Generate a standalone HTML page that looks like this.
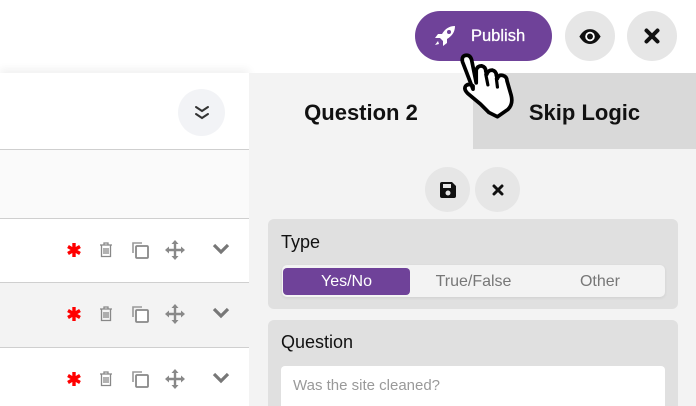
<!DOCTYPE html>
<html><head><meta charset="utf-8"><style>
*{box-sizing:border-box;margin:0;padding:0}
html,body{width:696px;height:406px;overflow:hidden}
body{background:#fff;font-family:"Liberation Sans",sans-serif;position:relative}
.abs{position:absolute}
.circ{position:absolute;border-radius:50%;display:flex;align-items:center;justify-content:center}
.line{position:absolute;left:0;width:249px;height:1px;background:#cfcfcf}
.ic{position:absolute}
</style></head><body>
<div class="abs" style="left:415px;top:11px;width:137px;height:50px;border-radius:25px;background:#6f4299;color:#fff;font-size:16.5px;display:flex;align-items:center;padding-left:56px;-webkit-text-stroke:0.3px #fff">Publish</div>
<svg class="abs" style="left:433px;top:25px" width="24" height="22" viewBox="0 0 24 22"><path d="M22 1C16 1 12 4 9 9L5 9 2 13 7 13 10 16 10 21 14 18 14 14C19 11 22 7 22 1Z" fill="#fff"/><circle cx="16" cy="7" r="2" fill="#6f4299"/><path d="M5 16L2 20 6 19Z" fill="#fff"/></svg>
<div class="circ" style="left:565px;top:11px;width:50px;height:50px;background:#e6e6e6">
<svg width="24" height="17" viewBox="0 0 22 16"><path d="M1 8C4 3 7 1 11 1S18 3 21 8C18 13 15 15 11 15S4 13 1 8Z" fill="#111"/><circle cx="11" cy="8" r="4.5" fill="#fff"/><circle cx="11" cy="8" r="2.8" fill="#111"/></svg></div>
<div class="circ" style="left:627px;top:11px;width:50px;height:50px;background:#e6e6e6">
<svg width="16" height="16" viewBox="0 0 16 16"><path d="M2.5 2.5L13.5 13.5M13.5 2.5L2.5 13.5" stroke="#111" stroke-width="4" stroke-linecap="round"/></svg></div>

<div class="abs" style="left:0;top:73px;width:249px;height:333px;background:#fff;box-shadow:0 -4px 8px rgba(0,0,0,0.06)"></div>
<div class="abs" style="left:0;top:150px;width:249px;height:68px;background:#fafafa"></div>
<div class="abs" style="left:0;top:283px;width:249px;height:64px;background:#f3f3f3"></div>
<div class="line" style="top:149px"></div>
<div class="line" style="top:218px"></div>
<div class="line" style="top:282px"></div>
<div class="line" style="top:347px"></div>
<div class="circ" style="left:178px;top:89px;width:47px;height:47px;background:#f2f3f6">
<svg width="16" height="16" viewBox="0 0 16 16"><path d="M2 2L8 6 14 2M2 9L8 13 14 9" stroke="#333" stroke-width="2" fill="none" stroke-linecap="round"/></svg></div>

<div class="abs" style="left:249px;top:73px;width:447px;height:333px;background:#f3f3f3"></div>
<div class="abs" style="left:473px;top:73px;width:223px;height:76px;background:#d9d9d9"></div>
<div class="abs" style="left:249px;top:100px;width:224px;text-align:center;font-size:22px;font-weight:bold;color:#111">Question 2</div>
<div class="abs" style="left:473px;top:100px;width:223px;text-align:center;font-size:22px;font-weight:bold;color:#111">Skip Logic</div>
<div class="circ" style="left:425px;top:167px;width:45px;height:45px;background:#e6e6e6">
<svg width="18" height="18" viewBox="0 0 18 18"><path d="M1 3Q1 1 3 1L13 1 17 5 17 15Q17 17 15 17L3 17Q1 17 1 15Z" fill="#111"/><rect x="4" y="3" width="8" height="4" fill="#e6e6e6"/><circle cx="9" cy="12" r="2.5" fill="#e6e6e6"/></svg></div>
<div class="circ" style="left:475px;top:167px;width:45px;height:45px;background:#e6e6e6">
<svg width="12" height="12" viewBox="0 0 12 12"><path d="M2 2L10 10M10 2L2 10" stroke="#111" stroke-width="3" stroke-linecap="round"/></svg></div>

<div class="abs" style="left:268px;top:219px;width:410px;height:90px;background:#e0e0e0;border-radius:6px"></div>
<div class="abs" style="left:281px;top:232px;font-size:18px;color:#111">Type</div>
<div class="abs" style="left:282px;top:265px;width:383px;height:32px;background:#f3f3f3;border-radius:5px;box-shadow:0 1px 3px rgba(0,0,0,0.08)"></div>
<div class="abs" style="left:283px;top:268px;width:127px;height:27px;background:#6f4299;border-radius:4px;color:#fff;font-size:16px;text-align:center;line-height:28px">Yes/No</div>
<div class="abs" style="left:410px;top:268px;width:127px;line-height:28px;text-align:center;font-size:16px;color:#777">True/False</div>
<div class="abs" style="left:537px;top:268px;width:126px;line-height:28px;text-align:center;font-size:16px;color:#777">Other</div>

<div class="abs" style="left:268px;top:320px;width:410px;height:100px;background:#e0e0e0;border-radius:6px"></div>
<div class="abs" style="left:281px;top:332px;font-size:18px;color:#111">Question</div>
<div class="abs" style="left:281px;top:366px;width:384px;height:50px;background:#fff;border-radius:4px;padding:11px 12px;font-size:15px;color:#999">Was the site cleaned?</div>

<div id="rows"></div>
<script>
var ys=[250,314,379],h='';
ys.forEach(function(y){
h+='<svg class="ic" style="left:66px;top:'+(y-8)+'px" width="16" height="16" viewBox="0 0 16 16"><path d="M8 1V15M2 4.5L14 11.5M14 4.5L2 11.5" stroke="#f00" stroke-width="3.4"/></svg>';
h+='<svg class="ic" style="left:99px;top:'+(y-8)+'px" width="14" height="16" viewBox="0 0 14 16"><path d="M1 3H13M5 3V1H9V3M2.5 3.5V14.5H11.5V3.5M5 6V12M7 6V12M9 6V12" stroke="#888" stroke-width="1.3" fill="none"/></svg>';
h+='<svg class="ic" style="left:130px;top:'+(y-10)+'px" width="20" height="20" viewBox="0 0 20 20"><path d="M12 3H3V13" stroke="#999" stroke-width="1.6" fill="none"/><rect x="6" y="6" width="12" height="12" rx="1" stroke="#888" stroke-width="1.8" fill="#fff"/></svg>';
h+='<svg class="ic" style="left:165px;top:'+(y-10)+'px" width="20" height="20" viewBox="0 0 20 20"><path d="M10 2V18M2 10H18" stroke="#888" stroke-width="2.4"/><path d="M10 0L6.5 4H13.5ZM10 20L6.5 16H13.5ZM0 10L4 6.5V13.5ZM20 10L16 6.5V13.5Z" fill="#888"/></svg>';
h+='<svg class="ic" style="left:212px;top:'+(y-7)+'px" width="18" height="12" viewBox="0 0 18 12"><path d="M2 2L9 9 16 2" stroke="#777" stroke-width="3.2" fill="none"/></svg>';
});
document.getElementById('rows').innerHTML=h;
</script>

<svg class="abs" style="left:457px;top:51px" width="66" height="70" viewBox="0 0 62 66">
<path d="M5 10Q4 4 9 4Q13 4 14 10L18 30L18 18Q19 14 23 14Q27 15 27 19L28 22Q29 18 33 18Q37 19 37 23L38 26Q39 22 43 23Q47 24 47 28L51 42Q53 50 48 55L38 62 30 58 22 50 10 40Q6 36 8 33Q11 30 15 33L15 36Z" fill="#fff" stroke="#000" stroke-width="3.5" stroke-linejoin="round"/>
<path d="M27 22L29 32M37 26L38 34" stroke="#000" stroke-width="3" stroke-linecap="round"/>
</svg>
</body></html>
